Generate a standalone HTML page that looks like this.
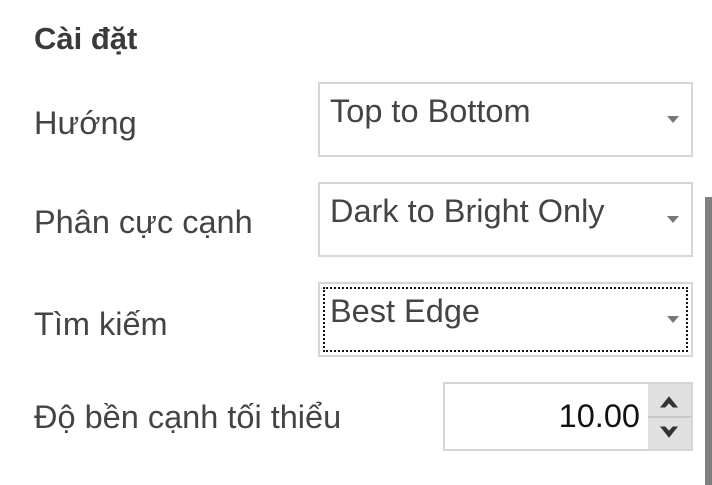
<!DOCTYPE html>
<html><head><meta charset="utf-8"><style>
html,body{margin:0;padding:0;width:712px;height:485px;background:#fff;overflow:hidden;position:relative;font-family:"Liberation Sans",sans-serif;color:#444}
.t{position:absolute;left:34px;font-size:32.5px;line-height:1;white-space:nowrap}
.b{position:absolute;box-sizing:border-box;border:2px solid #d6d6d6;background:#fff}
.v{position:absolute;left:10px;top:10px;font-size:32.5px;line-height:1;color:#444;white-space:nowrap}
.ar{position:absolute;right:12px;width:0;height:0;border-left:6px solid transparent;border-right:6px solid transparent;border-top:7px solid #777}
</style></head><body>
<div class="t" style="top:23px;font-weight:bold;font-size:31px;color:#3a3a3a">Cài đặt</div>
<div class="t" style="top:107px">Hướng</div>
<div class="t" style="top:206px">Phân cực cạnh</div>
<div class="t" style="top:308px">Tìm kiếm</div>
<div class="t" style="top:401px">Độ bền cạnh tối thiểu</div>

<div class="b" style="left:318px;top:82px;width:375px;height:75px"><div class="v" style="top:11px">Top to Bottom</div><div class="ar" style="top:32px"></div></div>
<div class="b" style="left:318px;top:182px;width:375px;height:75px"><div class="v" style="top:11px">Dark to Bright Only</div><div class="ar" style="top:32px"></div></div>
<div class="b" style="left:318px;top:282px;width:375px;height:75px"><div style="position:absolute;left:3px;top:3px;right:3px;bottom:3px;border:2px dotted #111"></div><div class="v" style="top:11px;left:10px">Best Edge</div><div class="ar" style="top:32px"></div></div>

<div class="b" style="left:443px;top:382px;width:250px;height:69px">
<div style="position:absolute;right:51px;top:16px;font-size:32.5px;line-height:1;color:#111">10.00</div>
<div style="position:absolute;right:0;top:0;width:43px;height:65px;background:#e0e0e0">
<div style="position:absolute;left:0;right:0;top:32px;height:2px;background:#c8c8c8"></div>
<svg width="43" height="65" style="position:absolute;left:0;top:0"><path d="M13 23 L21 13 L29 23 L25 23 L21 18.5 L17 23 Z" fill="#333" stroke="#333" stroke-width="1"/><path d="M13 43 L21 53 L29 43 L25 43 L21 47.5 L17 43 Z" fill="#333" stroke="#333" stroke-width="1"/></svg>
</div></div>

<div style="position:absolute;left:705px;top:197px;width:7px;height:288px;background:#808080"></div>
</body></html>
